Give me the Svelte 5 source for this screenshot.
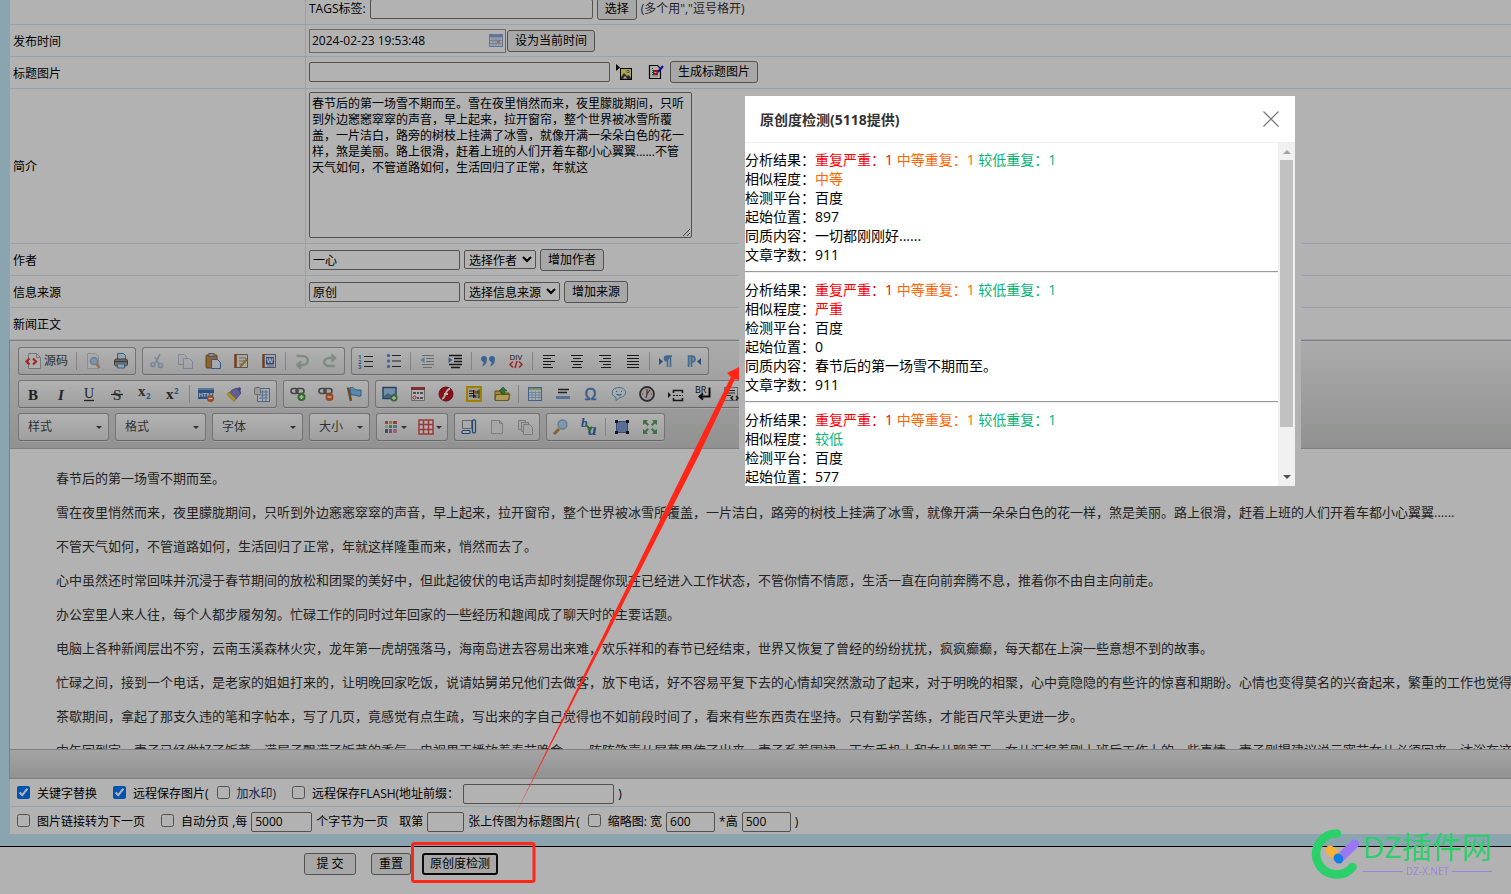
<script lang="ts">
    const icons: Record<string, string> = {
        source: '<path d="M3.5.5h8l4 4v11h-12z" fill="#fafafa" stroke="#aaa"/><path d="M11.5.5v4h4" fill="none" stroke="#aaa"/><path d="M4.500 5.500 1.500 8.500l3 3M8 5.500l3 3-3 3" fill="none" stroke="#e8392b" stroke-width="2.200"/>',
        preview: '<path d="M2.500.500h8l3 3v12h-11z" fill="#f4f4f4" stroke="#ccc"/><circle cx="9" cy="8" r="3.500" fill="#b7d6ef" stroke="#9bb8d0" stroke-width="1.500"/><path d="m11.500 11 3 4" stroke="#d9a273" stroke-width="2.500"/>',
        print: '<path d="M4.500 6V.500h6l2 2V6" fill="#dcebfa" stroke="#4b86c4"/><rect x="1.500" y="6" width="13" height="7" rx="2" fill="#aaa" stroke="#555"/><path d="M2 8.500h12" stroke="#555" stroke-width="1.500"/><path d="M4.500 11h7v4h-7z" fill="#d7eafa" stroke="#4b86c4"/>',
        cut: '<g opacity=".4" fill="none" stroke="#5483b8" stroke-width="1.700"><path d="M11 1 6.500 10M6 4l4 7"/><circle cx="4" cy="11.500" r="2"/><circle cx="11.500" cy="12.500" r="2"/></g>',
        copy: '<g opacity=".45" fill="#e8eef6" stroke="#6a8cb8"><path d="M1.500 1.500h6l2 2v8h-8z"/><path d="M6.500 5.500h6l3 3v7h-9z"/></g>',
        paste: '<rect x="1" y="2" width="11" height="13" rx="1" fill="#c98f4d" stroke="#8b5a25"/><rect x="4" y=".500" width="5" height="3" fill="#ccc" stroke="#777"/><path d="M6.500 6.500h6l3 3v6h-9z" fill="#eaf3fc" stroke="#4c7fb8"/>',
        pasteText: '<path d="M2.500 1.500h12v13h-12z" fill="#f3f1e8" stroke="#8b7a6a"/><path d="M2.500 1v14" stroke="#a45a32" stroke-width="2.500"/><path d="M6 5h7M6 8h6M6 11h4" stroke="#999"/><path d="m14 5-6 7-1 2 2-1 6-7z" fill="#eeb33c" stroke="#9a6c1d" stroke-width=".600"/>',
        pasteWord: '<path d="M2.500 1.500h12v13h-12z" fill="#edf2fb" stroke="#6a7ca5"/><path d="M2.500 1v14" stroke="#a45a32" stroke-width="2.500"/><path d="M6 13h7" stroke="#888"/><rect x="5" y="4" width="8" height="7.500" fill="#3f67b5"/><text x="5.500" y="10.300" font-size="7" font-weight="700" fill="#fff">W</text>',
        undo: '<path d="M2.500 3h6c7 0 7 9 0 9H4M7 8.500 3.500 12 7 15.500" fill="none" stroke="#94b89a" stroke-width="2.500" opacity=".65"/>',
        redo: '<path d="M13.500 5h-6c-7 0-7 8 0 8H13M9.500 1.500 13 5 9.500 8.500" fill="none" stroke="#94b89a" stroke-width="2.500" opacity=".65"/>',
        ol: '<path d="M6 3.500h9M6 8.500h9M6 13.500h9" stroke="#333" stroke-width="1.200"/><g font-size="6" font-weight="700" fill="#447bc5"><text x="0" y="5.500">1</text><text x="0" y="10.700">2</text><text x="0" y="16">3</text></g>',
        ul: '<path d="M6 2.500h9M6 8h9M6 13.500h9" stroke="#333" stroke-width="1.200"/><g fill="#6395d8"><circle cx="2.500" cy="2.500" r="1.700"/><circle cx="2.500" cy="8" r="1.700"/><circle cx="2.500" cy="13.500" r="1.700"/></g>',
        outdent: '<path d="M3 2.500h12M7 5.500h8M7 8.500h8M3 11.500h12M4 14.500h9" stroke="#999" stroke-width="1.200"/><path d="M5.500 4v6L1.500 7z" fill="#8db1d5"/>',
        indent: '<path d="M2 2.500h13M7 5.500h8M7 8.500h8M2 11.500h13M4 14.500h9" stroke="#222" stroke-width="1.500"/><path d="M1.500 4v6l4-3z" fill="#4f87c9"/>',
        quote: '<path d="M1 6a3 3 0 1 1 6 0c0 4-2 6.500-5 7.500 1-2 1.500-3 1.500-4.500C2 8.500 1 7.500 1 6zM9 6a3 3 0 1 1 6 0c0 4-2 6.500-5 7.500 1-2 1.500-3 1.500-4.500C10 8.500 9 7.500 9 6z" fill="#5590d4"/>',
        div: '<text x="1.500" y="7" font-size="8" fill="#222">DIV</text><path d="m5 8.500-3 3 3 3M11 8.500l3 3-3 3M9 8l-2 7" fill="none" stroke="#e03c42" stroke-width="1.600"/>',
        left: '<path d="M2 2.500h12M2 5.500h8M2 8.500h12M2 11.500h8M2 14.500h10" stroke="#222" stroke-width="1.200"/>',
        center: '<path d="M2 2.500h12M4 5.500h8M2 8.500h12M4 11.500h8M3 14.500h10" stroke="#222" stroke-width="1.200"/>',
        right: '<path d="M2 2.500h12M6 5.500h8M2 8.500h12M6 11.500h8M4 14.500h10" stroke="#222" stroke-width="1.200"/>',
        justify: '<path d="M2 2.500h12M2 5.500h12M2 8.500h12M2 11.500h12M2 14.500h12" stroke="#222" stroke-width="1.200"/>',
        ltr: '<path d="M1 5v7l4-3.500z" fill="#3f75ae"/><path d="M9 8a2.500 2.500 0 0 1 0-5h5M9.500 3v11M12.500 3v11" stroke="#6598cc" stroke-width="1.600" fill="#6598cc"/>',
        rtl: '<path d="M15 5v7l-4-3.500z" fill="#3f75ae"/><path d="M2.500 14V3H6a3 3 0 0 1 0 6" stroke="#6598cc" stroke-width="1.600" fill="#a9c7e6"/><path d="M5.500 3v11" stroke="#6598cc" stroke-width="1.600"/>',
        bold: '<text x="3" y="13.500" font-family="Liberation Serif" font-size="15" font-weight="700" fill="#333">B</text>',
        italic: '<text x="5" y="13.500" font-family="Liberation Serif" font-size="15" font-style="italic" font-weight="700" fill="#333">I</text>',
        underline: '<text x="3" y="12" font-family="Liberation Serif" font-size="14" fill="#333">U</text><path d="M3 14.500h10" stroke="#333" stroke-width="1.300"/>',
        strike: '<text x="4" y="13.500" font-family="Liberation Serif" font-size="15" font-weight="700" fill="#555">S</text><path d="M2 8.500h12" stroke="#333" stroke-width="1.300"/>',
        sub: '<text x="1" y="10" font-family="Liberation Serif" font-size="15" font-weight="700" fill="#444">x</text><text x="9" y="13" font-size="8" font-weight="700" fill="#477fc6">2</text>',
        sup: '<text x="1" y="13" font-family="Liberation Serif" font-size="15" font-weight="700" fill="#333">x</text><text x="9" y="8" font-size="8" font-weight="700" fill="#477fc6">2</text>',
        html: '<rect x="0" y="2" width="16" height="11" fill="#3d75bb"/><path d="M0 3h16" stroke="#82ace0" stroke-width="2"/><text x="0.500" y="10.500" font-size="6" font-weight="700" fill="#fff">HTML</text><circle cx="12.500" cy="12.500" r="3.500" fill="#df632d"/><path d="M10.500 12.500h4" stroke="#fff" stroke-width="1.500"/>',
        brush: '<path d="m13 1 2 1-1 7-5-4z" fill="#6b68b3"/><path d="m6 4 5-2 4 5-5 6-2 0-5-6z" fill="#8a89d6" stroke="#504e8f" stroke-width=".700"/><path d="m3 6 7 7-2 2.500L1 8.500z" fill="#f3d13c" stroke="#c39b1c" stroke-width=".700"/>',
        form: '<rect x="3.500" y="2.500" width="12" height="13" fill="#f4f9ff" stroke="#6c94c1"/><path d="M5 6h9M5 9h9M5 12h9M8.500 4v11M12 4v11" stroke="#7ba1cf"/><rect x=".500" y="1.500" width="6" height="7" rx="1" fill="#ddd" stroke="#999"/>',
        link: '<g fill="none" stroke="#666" stroke-width="1.600"><rect x="1" y="2.500" width="7" height="5" rx="2.500"/><rect x="6" y="2.500" width="8" height="5" rx="2.500"/></g><circle cx="11.500" cy="11" r="4" fill="#4a9a3e"/><path d="M9.500 11h4M11.500 9v4" stroke="#fff" stroke-width="1.500"/>',
        unlink: '<g fill="none" stroke="#666" stroke-width="1.600"><rect x="1" y="2.500" width="7" height="5" rx="2.500"/><rect x="6" y="2.500" width="8" height="5" rx="2.500"/></g><circle cx="11.500" cy="11" r="4" fill="#e0662a"/><path d="M9.500 11h4" stroke="#fff" stroke-width="1.500"/>',
        anchor: '<path d="M2 1.500 5 15" stroke="#a6672b" stroke-width="2.500"/><path d="M4 2c4-2 4 2 7 2h4v6c-5 1-5-2-10-1z" fill="#83c4f0" stroke="#3d86c0"/>',
        image: '<rect x="1" y="1.500" width="13" height="11" fill="#a5cfee" stroke="#3a608f" stroke-width="1.500"/><path d="m2 10 4-3 3 2 4-2v5H2z" fill="#5e93bd"/><circle cx="12" cy="12" r="3.500" fill="#4c9a40"/><path d="M10 12h4M12 10v4" stroke="#fff" stroke-width="1.300"/>',
        calendar: '<path d="M1.500 1.500h13v13h-13z" fill="#fff" stroke="#999"/><path d="M1 2.500h14" stroke="#b34541" stroke-width="3"/><path d="M3 7h3M7 7h2M10 7h3M7 12h2M10 12h3" stroke="#444" stroke-width="1.600"/><circle cx="4.500" cy="11.500" r="1.500" fill="none" stroke="#d33"/>',
        flash: '<circle cx="8" cy="8" r="7" fill="#c51822" stroke="#901820"/><path d="M12 3c-5 0-4 9-8 10M6 8h4" fill="none" stroke="#fff" stroke-width="1.800"/>',
        media: '<rect x="1" y="1" width="14" height="14" fill="#e8e4cf" stroke="#e4b800" stroke-width="2"/><path d="m8 4 2.500 1v3L8 7.500z" fill="#de5d26"/><path d="m10.500 5 2-1v4h-2z" fill="#388e44"/><path d="M8 8.500 10.500 9v3L8 11.500z" fill="#2b4d9b"/><path d="M10.500 9h2v3h-2z" fill="#e6b820"/><path d="M3 5h4M3 7.500h4M3 10h4M13 3.500v9M7.500 4v8" stroke="#222"/>',
        folder: '<path d="M1 5h5l1 2h8v7H1z" fill="#e9c342" stroke="#846b1e"/><path d="M2 8.500h14l-2 6H1z" fill="#f7df80" stroke="#967c2a"/><path d="M9 1 5 5h2.500v3h3V5H13z" fill="#42a449" stroke="#297a30" stroke-width=".600"/>',
        table: '<rect x="1.500" y="1.500" width="13" height="13" fill="#f3f8ff" stroke="#5b8ac8"/><path d="M2 3h12" stroke="#a9cf98" stroke-width="2"/><path d="M2 6.500h12M2 9h12M2 11.500h12M5 5v9M8.500 5v9M12 5v9" stroke="#88aadb" stroke-width=".700"/>',
        hr: '<path d="M3 3.500h11M3 6.500h9" stroke="#333" stroke-width="1.500"/><rect x="1" y="10" width="14" height="3" fill="#7ba4df"/>',
        omega: '<text x="1.500" y="14" font-family="Liberation Sans" font-size="16" fill="#5085cc" stroke="#5085cc" stroke-width=".500">Ω</text>',
        smiley: '<path d="M8 1.500c8 0 9 9 1 10l-4 3v-3C-1 9 0 1.500 8 1.500z" fill="#eaf6ff" stroke="#5ea0cd"/><path d="M5 5.500h1M10 5.500h1M5.500 8c1 1.500 4 1.500 5 0" fill="none" stroke="#3e78a3" stroke-width="1.200"/>',
        clock: '<circle cx="8" cy="8" r="7" fill="#ddd" stroke="#444" stroke-width="1.800"/><path d="M8 3v5l3-4M8 8l-1 4M3 8h1M12 8h1" stroke="#7d4040" stroke-width="1.200" fill="none"/>',
        page: '<path d="m1 6 3 3-3 3z" fill="#222"/><path d="M6.500 7V4.500h9V7M6.500 12v2.500h9V12" fill="none" stroke="#222" stroke-width="1.600"/><path d="M6 9.500h10" stroke="#222" stroke-dasharray="2 1"/>',
        br: '<text x="0" y="6.500" font-size="9" fill="#111">BR</text><path d="M14.500 1.500v9H5M8 7.500l-3.500 3L8 13.500" fill="none" stroke="#111" stroke-width="2"/>',
        blocks: '<path d="M1.500 1.500h13v13h-13z" fill="none" stroke="#333" stroke-dasharray="1 1"/><path d="M4 4.500h8M4 7h8M4 9.500h4" stroke="#333"/><path d="m10 10-2 2 2 2M13 10l2 2-2 2" fill="none" stroke="#222" stroke-width="1.400"/>',
        color: '<g><path fill="#d85b56" d="M2 2h3v3H2zM10 2h4v3h-4z"/><path fill="#e1a64b" d="M6 2h3v3H6z"/><path fill="#c5d89c" d="M2 6h3v3H2z"/><path fill="#58b65a" d="M6 6h3v3H6z"/><path fill="#65b2c6" d="M10 6h4v3h-4z"/><path fill="#4e70a9" d="M2 10h3v4H2z"/><path fill="#ae6db1" d="M6 10h3v4H6z"/><path fill="#df8aa3" d="M10 10h4v4h-4z"/></g>',
        border: '<path d="M1 1h14v14H1zM1 5.500h14M1 10.500h14M5.500 1v14M10.500 1v14" fill="#fff" stroke="#df5150" stroke-width="1.500"/>',
        select: '<path d="M1.500 1.500h9v8h-9z" fill="none" stroke="#333" stroke-dasharray="1 1"/><rect x="11.500" y=".800" width="3" height="13" rx="1" fill="#eef6ff" stroke="#2f64a4" stroke-width="1.200"/><rect x="1" y="11.500" width="8" height="3" rx="1" fill="#eef6ff" stroke="#2f64a4" stroke-width="1.200"/>',
        newPage: '<path d="M2.500 1.500h8l3 3v10h-11z" fill="#efefef" stroke="#b5b5b5"/><path d="M10.500 1.500v3h3" fill="none" stroke="#b5b5b5"/>',
        templates: '<g fill="#eee" stroke="#b0b0b0"><path d="M1.500 1.500h7v9h-7z"/><path d="M4.500 3.500h7v9h-7z"/><path d="M6.500 5.500h6l3 3v7h-9z"/></g>',
        find: '<path d="m6 10-5 5" stroke="#c28a49" stroke-width="3"/><circle cx="9.500" cy="5.500" r="4.500" fill="#b7d7f5" stroke="#8bb0d3" stroke-width="1.300"/>',
        replace: '<text x="0" y="8" font-family="Liberation Serif" font-style="italic" font-weight="700" font-size="13" fill="#356db5">b</text><text x="7" y="16" font-family="Liberation Serif" font-style="italic" font-weight="700" font-size="17" fill="#356db5">a</text><path d="m5 6 4 4" stroke="#49993f" stroke-width="2"/><path d="m11 7-1 5-4-2z" fill="#49993f"/>',
        selectAll: '<rect x="2.500" y="2.500" width="11" height="11" fill="#7f9fd3" stroke="#4a6ca5"/><path d="M1 1h3v3H1zM12 1h3v3h-3zM1 12h3v3H1zM12 12h3v3h-3z" fill="#222"/>',
        maximize: '<path d="M1 1h5L4.500 3 7 5.500 5.500 7 3 4.500 1 6zM15 1h-5l1.500 2L9 5.500 10.500 7 13 4.500 15 6zM1 15h5l-1.500-2L7 10.500 5.500 9 3 11.500 1 10zM15 15h-5l1.500-2L9 10.500 10.500 9l2.500 2.500 2-1.500z" fill="#5aa360"/>'
    }

    // '|' draws a separator inside a group
    const rowOne = [
        ['source', '|', 'preview', 'print'],
        ['cut', 'copy', 'paste', 'pasteText', 'pasteWord', '|', 'undo', 'redo'],
        ['ol', 'ul', '|', 'outdent', 'indent', '|', 'quote', 'div', '|', 'left', 'center', 'right', 'justify', '|', 'ltr', 'rtl']
    ]
    const rowTwo = [
        ['bold', 'italic', 'underline', 'strike', 'sub', 'sup', '|', 'html', 'brush', 'form'],
        ['link', 'unlink', 'anchor'],
        ['image', 'calendar', 'flash', 'media', 'folder', '|', 'table', 'hr', 'omega', 'smiley', 'clock', 'page', 'br', 'blocks']
    ]
    const rowThree = [
        ['color', 'border'],
        ['select', 'newPage', 'templates'],
        ['find', 'replace', '|', 'selectAll', 'maximize']
    ]
    const combos = ['样式', '格式', '字体', '大小']

    const summary = '春节后的第一场雪不期而至。雪在夜里悄然而来，夜里朦胧期间，只听到外边窸窸窣窣的声音，早上起来，拉开窗帘，整个世界被冰雪所覆盖，一片洁白，路旁的树枝上挂满了冰雪，就像开满一朵朵白色的花一样，煞是美丽。路上很滑，赶着上班的人们开着车都小心翼翼......不管天气如何，不管道路如何，生活回归了正常，年就这'

    const paragraphs = [
        '春节后的第一场雪不期而至。',
        '雪在夜里悄然而来，夜里朦胧期间，只听到外边窸窸窣窣的声音，早上起来，拉开窗帘，整个世界被冰雪所覆盖，一片洁白，路旁的树枝上挂满了冰雪，就像开满一朵朵白色的花一样，煞是美丽。路上很滑，赶着上班的人们开着车都小心翼翼......',
        '不管天气如何，不管道路如何，生活回归了正常，年就这样隆重而来，悄然而去了。',
        '心中虽然还时常回味并沉浸于春节期间的放松和团聚的美好中，但此起彼伏的电话声却时刻提醒你现在已经进入工作状态，不管你情不情愿，生活一直在向前奔腾不息，推着你不由自主向前走。',
        '办公室里人来人往，每个人都步履匆匆。忙碌工作的同时过年回家的一些经历和趣闻成了聊天时的主要话题。',
        '电脑上各种新闻层出不穷，云南玉溪森林火灾，龙年第一虎胡强落马，海南岛进去容易出来难，欢乐祥和的春节已经结束，世界又恢复了曾经的纷纷扰扰，疯疯癫癫，每天都在上演一些意想不到的故事。',
        '忙碌之间，接到一个电话，是老家的姐姐打来的，让明晚回家吃饭，说请姑舅弟兄他们去做客，放下电话，好不容易平复下去的心情却突然激动了起来，对于明晚的相聚，心中竟隐隐的有些许的惊喜和期盼。心情也变得莫名的兴奋起来，繁重的工作也觉得',
        '茶歇期间，拿起了那支久违的笔和字帖本，写了几页，竟感觉有点生疏，写出来的字自己觉得也不如前段时间了，看来有些东西贵在坚持。只有勤学苦练，才能百尺竿头更进一步。',
        '中午回到家，妻子已经做好了饭菜，满屋子飘满了饭菜的香气，电视里正播放着春节晚会，一阵阵笑声从屏幕里传了出来，妻子系着围裙，正在手机上和女儿聊着天，女儿汇报着刚上班后工作上的一些事情，妻子则提建议说元宵节女儿必须回来，沐浴在这'
    ]

    const results = [
        { level: '中等', cls: 'mid', start: '897', text: '一切都刚刚好......', words: '911' },
        { level: '严重', cls: 'high', start: '0', text: '春节后的第一场雪不期而至。', words: '911' },
        { level: '较低', cls: 'low', start: '577', text: '', words: '' }
    ]
</script>

{#snippet icon(name: string)}
    <svg class="icon" width="16" height="16" viewBox="0 0 16 16" aria-hidden="true">{@html icons[name]}</svg>
{/snippet}

{#snippet group(items: string[])}
    <div class="group">
        {#each items as item}
            {#if item === '|'}
                <span class="sep"></span>
            {:else if item === 'source'}
                <button type="button" class="tool source">{@render icon(item)}源码</button>
            {:else if item === 'color' || item === 'border'}
                <button type="button" class="tool drop" aria-label={item}>{@render icon(item)}<i class="arrow"></i></button>
            {:else}
                <button type="button" class="tool" aria-label={item}>{@render icon(item)}</button>
            {/if}
        {/each}
    </div>
{/snippet}

<div class="page">
    <form class="sheet">
        <table class="fields">
            <tbody>
                <tr>
                    <th></th>
                    <td><div class="line"><label for="tags">TAGS标签:</label><input id="tags" class="w-tags" type="text" /><button type="button">选择</button><span class="hint">(多个用","逗号格开)</span></div></td>
                </tr>
                <tr>
                    <th><label for="time">发布时间</label></th>
                    <td>
                        <div class="line tight">
                            <span class="date">
                                <input id="time" type="text" value="2024-02-23 19:53:48" />
                                <svg width="14" height="13" viewBox="0 0 14 13" aria-hidden="true">
                                    <rect x=".5" y=".5" width="13" height="12" fill="#e6eefa" stroke="#8fa8cf" />
                                    <path d="M1 2h12" stroke="#8ba9dc" stroke-width="3" />
                                    <path d="M1 6.500h12M1 9.500h12M4 4v8M7 4v8M10 4v8" stroke="#a9bddb" />
                                    <path d="M8 6h3v3H8z" fill="#e5a07e" />
                                </svg>
                            </span>
                            <button type="button">设为当前时间</button>
                        </div>
                    </td>
                </tr>
                <tr class="raised">
                    <th><label for="pic">标题图片</label></th>
                    <td>
                        <div class="line">
                            <input id="pic" class="w-pic" type="text" />
                            <a class="pic-link" href="#upload" aria-label="上传">
                                <svg width="17" height="17" viewBox="0 0 17 17" aria-hidden="true">
                                    <path d="M0 0v7l4-3.500z" />
                                    <rect x="4.500" y="4.500" width="11" height="11" fill="#f5f06a" stroke="#000" />
                                    <circle cx="12" cy="7.500" r="1.200" fill="#fff" stroke="#333" stroke-width=".700" />
                                    <path d="m5 13 3-4 3 3 2-1 2 3v1H5z" fill="#444" />
                                    <path d="m7 14.500 2-2.500 2 2.500z" fill="#fff" />
                                </svg>
                            </a>
                            <a class="pic-link edit" href="#edit" aria-label="编辑">
                                <svg width="16" height="17" viewBox="0 0 16 17" aria-hidden="true">
                                    <path d="M1.500 2.500h8l3 3v10h-11z" fill="#fff" stroke="#000" stroke-width="1.200" />
                                    <path d="M4.500 5v8h6" fill="none" stroke="#117a39" stroke-dasharray="1 1" />
                                    <path d="M5 7h5v5H5z" fill="#e01a26" />
                                    <path d="M6.500 9.500h2" stroke="#fff" />
                                    <path d="m15 3-5 6" stroke="#1717dd" stroke-width="2.200" />
                                </svg>
                            </a>
                            <button type="button">生成标题图片</button>
                        </div>
                    </td>
                </tr>
                <tr class="tall raised">
                    <th><label for="intro">简介</label></th>
                    <td><textarea id="intro" value={summary}></textarea></td>
                </tr>
                <tr>
                    <th><label for="author">作者</label></th>
                    <td>
                        <div class="line">
                            <input id="author" class="w-name" type="text" value="一心" />
                            <select class="w-author" aria-label="选择作者"><option>选择作者</option></select>
                            <button type="button">增加作者</button>
                        </div>
                    </td>
                </tr>
                <tr>
                    <th><label for="origin">信息来源</label></th>
                    <td>
                        <div class="line">
                            <input id="origin" class="w-name" type="text" value="原创" />
                            <select class="w-origin" aria-label="选择信息来源"><option>选择信息来源</option></select>
                            <button type="button">增加来源</button>
                        </div>
                    </td>
                </tr>
                <tr>
                    <th colspan="2" class="wide">新闻正文</th>
                </tr>
            </tbody>
        </table>

        <div class="editor">
            <div class="toolbar">
                <div class="tools">{#each rowOne as g}{@render group(g)}{/each}</div>
                <div class="tools">{#each rowTwo as g}{@render group(g)}{/each}</div>
                <div class="tools">
                    {#each combos as combo}
                        <button type="button" class="group combo" class:short={combo === '大小'}>{combo}<i class="arrow"></i></button>
                    {/each}
                    {#each rowThree as g}{@render group(g)}{/each}
                </div>
            </div>
            <div class="content">
                {#each paragraphs as text}
                    <p>{text}</p>
                {/each}
            </div>
            <div class="status"></div>
        </div>

        <div class="options">
            <label><input type="checkbox" checked />关键字替换</label>
            <label class="next"><input type="checkbox" checked />远程保存图片(</label>
            <label class="mark"><input type="checkbox" />加水印)</label>
            <label class="next"><input type="checkbox" />远程保存FLASH(地址前缀：</label>
            <input class="w-name" type="text" aria-label="地址前缀" />
            <span>)</span>
        </div>
        <div class="options">
            <label><input type="checkbox" />图片链接转为下一页</label>
            <label class="next"><input type="checkbox" />自动分页 ,每</label>
            <input class="w-bytes" type="text" value="5000" aria-label="每页字节" />
            <span>个字节为一页</span>
            <label class="nth" for="nth">取第</label>
            <input id="nth" class="w-nth" type="text" />
            <span>张上传图为标题图片(</span>
            <label class="thumb"><input type="checkbox" />缩略图: 宽</label>
            <input class="w-size" type="text" value="600" aria-label="宽" />
            <label for="high">*高</label>
            <input id="high" class="w-size" type="text" value="500" />
            <span>)</span>
        </div>
    </form>

    <div class="actions">
        <button type="submit" class="submit">提 交</button>
        <button type="reset">重置</button>
        <button type="button" class="check">原创度检测</button>
    </div>
</div>

<div class="shade"></div>

<div class="dialog" role="dialog" aria-labelledby="dialog-title">
    <div class="dialog-head">
        <h2 id="dialog-title">原创度检测(5118提供)</h2>
        <button type="button" class="close" aria-label="关闭">
            <svg width="16" height="16" viewBox="0 0 16 16"><path d="m.5.5 15 15M15.500.5l-15 15" stroke="#777" stroke-width="1.200" /></svg>
        </button>
    </div>
    <div class="dialog-body">
        <div class="results">
            {#each results as r, i}
                {#if i > 0}<hr />{/if}
                <div>分析结果：<span class="high">重复严重：1</span> <span class="mid">中等重复：1</span> <span class="low">较低重复：1</span></div>
                <div>相似程度：<span class={r.cls}>{r.level}</span></div>
                <div>检测平台：百度</div>
                <div>起始位置：{r.start}</div>
                {#if r.text}
                    <div>同质内容：{r.text}</div>
                    <div>文章字数：{r.words}</div>
                {/if}
            {/each}
        </div>
        <div class="scrollbar" aria-hidden="true">
            <i class="up"></i>
            <span class="thumb-bar"></span>
            <i class="down"></i>
        </div>
    </div>
</div>

<svg class="pointer" width="760" height="560" viewBox="0 0 760 560" aria-hidden="true">
    <path d="M514 482 692 120 731 42 727 38 739 32 739 45 735 44 698 122z" fill="#ff2618" />
    <rect x="412.500" y="508.500" width="121.500" height="38" rx="2" fill="none" stroke="#ff2618" stroke-width="3" />
</svg>

<div class="brand">
    <svg width="50" height="50" viewBox="0 0 50 50" aria-hidden="true">
        <path d="M26 4.500A20.500 20.500 0 1 0 41.500 38" fill="none" stroke="#2bd06b" stroke-width="8.500" stroke-linecap="round" />
        <path d="m28 30 15.500-15" stroke="#9b77f3" stroke-width="9" stroke-linecap="round" />
        <path d="m19 21 9 9" stroke="#f9b233" stroke-width="9" stroke-linecap="round" />
        <path d="m27 29 1 1" stroke="#107df0" stroke-width="9" stroke-linecap="round" />
    </svg>
    <div class="brand-text">
        <strong>DZ插件网</strong>
        <small>DZ-X.NET</small>
    </div>
</div>

<style>
    :global(body) {
        overflow: hidden;
        background: #fff;
        color: #000;
        font-family: "Open Sans", "Noto Sans CJK SC", sans-serif;
        font-size: 12px;
        line-height: 16px;
    }

    .page {
        /* first row is partly scrolled out of view */
        margin-top: -7px;
    }

    .sheet {
        padding: 0 0 11px 9px;
        background: #c7edfc;
        border-bottom: 1px solid #000;
        overflow: hidden;
    }

    .fields {
        width: 100%;
        border-collapse: separate;
        border-spacing: 0;
        background: #fff;
    }

    .fields th,
    .fields td {
        box-sizing: border-box;
        height: 32px;
        padding: 0 3px;
        border-bottom: 1px solid #d3e8f8;
        border-left: 1px solid #d3e8f8;
        text-align: left;
        font-weight: 400;
    }

    .fields th {
        width: 296px;
        padding-top: 2px;
    }

    .fields .raised td {
        padding-bottom: 2px;
    }

    .fields .tall td {
        height: 155px;
    }

    .line {
        display: flex;
        align-items: center;
        gap: 4px;
    }

    .line.tight {
        gap: 1px;
    }

    .hint {
        color: #333;
    }

    input,
    select,
    textarea,
    button {
        box-sizing: border-box;
        margin: 0;
        color: #000;
        font: inherit;
    }

    input[type="text"],
    textarea {
        height: 20px;
        padding: 0 3px;
        border: 1px solid #767676;
        border-radius: 2px;
        background: #fff;
    }

    textarea {
        display: block;
        width: 383px;
        height: 146px;
        padding: 3px 2px;
    }

    select {
        height: 19px;
        padding: 0;
        border: 1px solid #767676;
        border-radius: 2px;
        background: #fff;
    }

    button {
        height: 22px;
        padding: 0 7px;
        border: 1px solid #767676;
        border-radius: 3px;
        background: #efefef;
        white-space: nowrap;
    }

    .w-tags { width: 223px; }
    .w-pic { width: 301px; }
    .w-name { width: 151px; }
    .w-author { width: 72px; }
    .w-origin { width: 96px; }
    .w-bytes { width: 61px; }
    .w-nth { width: 37px; }
    .w-size { width: 49px; }

    .date {
        display: flex;
        align-items: center;
        width: 195px;
        height: 22px;
        border: 1px solid #999;
    }

    .date input[type="text"] {
        flex: 1;
        min-width: 0;
        padding: 0 2px;
        border: 0;
    }

    .date svg {
        margin-right: 2px;
    }

    .pic-link {
        display: flex;
        padding: 1px 0 0 2px;
    }

    .pic-link.edit {
        padding: 0 2px 0 11px;
    }

    .editor {
        border: 1px solid #b6b6b6;
        border-right: 0;
        background: #fff;
    }

    .toolbar {
        height: 101px;
        padding: 6px 8px 0;
        border-bottom: 1px solid #b6b6b6;
        background: linear-gradient(#f5f5f5, #cfd1cf);
    }

    .tools {
        display: flex;
        gap: 6px;
        margin-bottom: 5px;
    }

    .group {
        display: flex;
        flex: none;
        box-sizing: border-box;
        height: 28px;
        border: 1px solid #a6a6a6;
        border-bottom-color: #979797;
        border-radius: 3px;
        background: linear-gradient(#fff, #e4e4e4);
        box-shadow: 0 1px 0 rgba(255, 255, 255, 0.5);
    }

    .tool {
        display: flex;
        align-items: center;
        width: 28px;
        height: 26px;
        padding: 0 6px;
        border: 0;
        background: none;
        color: #474747;
    }

    .tool.source {
        gap: 3px;
        width: auto;
    }

    .tool.drop {
        gap: 2px;
        width: 35px;
    }

    .icon {
        flex: none;
        overflow: visible;
    }

    .sep {
        width: 1px;
        height: 18px;
        margin: 4px 2px 0;
        background: #bcbcbc;
    }

    .combo {
        align-items: center;
        justify-content: space-between;
        width: 91px;
        padding: 0 6px 0 9px;
        color: #474747;
    }

    .combo.short {
        width: 61px;
    }

    .arrow {
        border: 3px solid transparent;
        border-top-color: #474747;
        border-bottom: 0;
    }

    .content {
        height: 300px;
        padding: 19px 46px 0;
        box-sizing: border-box;
        overflow: hidden;
        color: #333;
        font-size: 13px;
        line-height: 21px;
        white-space: nowrap;
    }

    .content p {
        margin: 0 0 13px;
    }

    .status {
        height: 28px;
        border-top: 1px solid #b6b6b6;
        background: linear-gradient(#ebebeb, #cfd1cf);
    }

    .options {
        display: flex;
        align-items: center;
        gap: 4px;
        height: 25px;
        padding: 2px 0 0 7px;
        border-bottom: 1px solid #d3e8f8;
        border-left: 1px solid #d3e8f8;
        background: #fff;
        white-space: nowrap;
    }

    .options label {
        display: flex;
        align-items: center;
        gap: 7px;
    }

    .options input[type="checkbox"] {
        width: 13px;
        height: 13px;
        margin-bottom: 3px;
    }

    .options .next {
        margin-left: 12px;
    }

    .options .mark,
    .options .thumb {
        margin-left: 4px;
    }

    .options .mark {
        color: #1c3566;
    }

    .options .nth {
        margin-left: 7px;
    }

    .actions {
        display: flex;
        padding: 6px 0 0 304px;
    }

    .submit {
        width: 52px;
        margin-right: 15px;
    }

    .actions .check {
        margin-left: 11px;
        padding: 0 6px;
        border: 2px solid #101010;
    }

    .shade {
        position: fixed;
        inset: 0;
        background: rgba(0, 0, 0, 0.3);
    }

    .dialog {
        position: fixed;
        top: 90px;
        left: 739px;
        width: 550px;
        border: 6px solid #b2b2b2;
        background: #fff;
        font-size: 14px;
        line-height: 19px;
    }

    .dialog-head {
        display: flex;
        align-items: center;
        justify-content: space-between;
        height: 46px;
        padding: 0 16px 0 15px;
        border-bottom: 1px solid #eee;
    }

    .dialog-head h2 {
        margin: 0;
        color: #333;
        font-size: 14px;
        font-weight: 700;
    }

    .close {
        display: flex;
        height: 16px;
        padding: 0;
        border: 0;
        background: none;
    }

    .dialog-body {
        display: flex;
        height: 343px;
    }

    .results {
        flex: 1;
        box-sizing: border-box;
        padding-top: 7px;
        overflow-y: auto;
        scrollbar-width: none;
    }

    .results hr {
        height: 0;
        margin: 7px 0;
        border: 0;
        border-top: 1px solid #999;
        border-bottom: 1px solid #eee;
    }

    .high { color: #f00; }
    .mid { color: #ff6600; }
    .low { color: #00b578; }

    .scrollbar {
        display: flex;
        flex-direction: column;
        align-items: center;
        width: 17px;
        background: #f1f1f1;
    }

    .thumb-bar {
        width: 13px;
        height: 267px;
        background: #c1c1c1;
    }

    .up,
    .down {
        border: 4px solid transparent;
    }

    .up {
        margin: 3px 0 6px;
        border-bottom-color: #a3a3a3;
    }

    .down {
        margin-top: auto;
        margin-bottom: 3px;
        border-top-color: #505050;
    }

    .pointer {
        position: absolute;
        top: 335px;
        left: 0;
        pointer-events: none;
    }

    .brand {
        position: fixed;
        right: 19px;
        bottom: 15px;
        display: flex;
        gap: 2px;
    }

    .brand-text {
        display: flex;
        flex-direction: column;
        color: #2bd06b;
    }

    .brand-text strong {
        font-size: 30px;
        font-weight: 400;
        line-height: 36px;
    }

    .brand-text small {
        display: flex;
        align-items: center;
        gap: 3px;
        color: #9b84dc;
        font-size: 10px;
        line-height: 12px;
    }

    .brand-text small::before,
    .brand-text small::after {
        content: "";
        flex: 1;
        height: 1px;
        background: #9b84dc;
    }
</style>
